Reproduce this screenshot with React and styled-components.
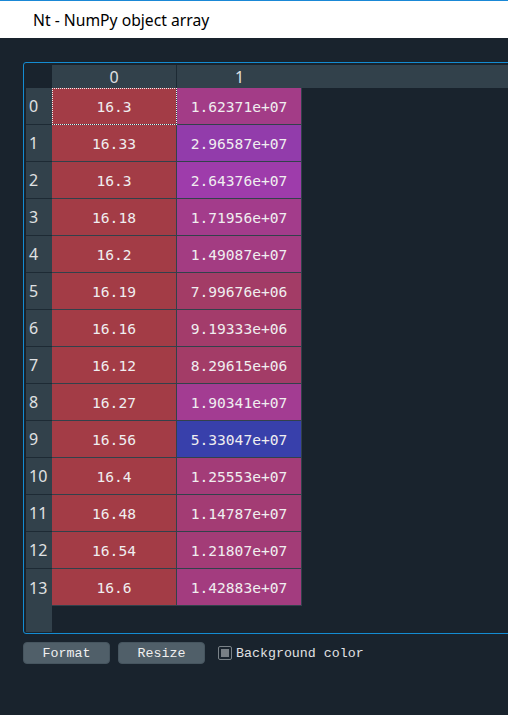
import styled, { createGlobalStyle } from "styled-components";

const GlobalStyle = createGlobalStyle`
  html, body {
    margin: 0;
    padding: 0;
    background: #19232d;
    overflow: hidden;
  }
`;

const col0 = [
  "16.3", "16.33", "16.3", "16.18", "16.2", "16.19", "16.16",
  "16.12", "16.27", "16.56", "16.4", "16.48", "16.54", "16.6",
];
const col1 = [
  "1.62371e+07", "2.96587e+07", "2.64376e+07", "1.71956e+07", "1.49087e+07",
  "7.99676e+06", "9.19333e+06", "8.29615e+06", "1.90341e+07", "5.33047e+07",
  "1.25553e+07", "1.14787e+07", "1.21807e+07", "1.42883e+07",
];

const all = [...col0, ...col1].map(Number);
const vmin = Math.min(...all);
const vmax = Math.max(...all);

// spyder-like background: hsv with alpha 0.6 over the dark page
const cellColor = (v) => {
  const h = 0.66 + (0.33 * (vmax - v)) / (vmax - vmin);
  const s = 0.7;
  const val = 1;
  const i = Math.floor(h * 6);
  const f = h * 6 - i;
  const p = val * (1 - s);
  const q = val * (1 - s * f);
  const t = val * (1 - s * (1 - f));
  const [r, g, b] = [
    [val, t, p],
    [q, val, p],
    [p, val, t],
    [p, q, val],
    [t, p, val],
    [val, p, q],
  ][i % 6];
  const mix = (c, bg) => Math.round(0.6 * c * 255 + 0.4 * bg);
  return `rgb(${mix(r, 25)}, ${mix(g, 35)}, ${mix(b, 45)})`;
};

const Window = styled.div`
  width: 508px;
  height: 715px;
  display: flex;
  flex-direction: column;
`;

const TitleBar = styled.div`
  height: 37px;
  border-top: 1px solid #1a88d6;
  background: #ffffff;
  display: flex;
  align-items: center;
  padding-left: 33px;
  font-family: "Noto Sans", sans-serif;
  font-size: 15.7px;
  color: #000000;
`;

const Content = styled.div`
  flex: 1;
  padding: 24px 0 0 23px;
  display: flex;
  flex-direction: column;
  gap: 8px;
`;

const Frame = styled.div`
  box-sizing: border-box;
  height: 572px;
  margin-right: -20px;
  border: 1px solid #148cd2;
  border-radius: 3px;
  padding: 2px 0 1px 2px;
  display: grid;
  grid-template-columns: 26px 1fr;
  grid-template-rows: 23px 1fr;
  overflow: hidden;
`;

const Corner = styled.div`
  background: #19232d;
`;

const HHeader = styled.div`
  background: #32414b;
  display: flex;
`;

const HCell = styled.div`
  width: 125px;
  box-sizing: border-box;
  border-right: 1px solid #1d2a34;
  display: flex;
  align-items: center;
  justify-content: center;
  font-family: "Noto Sans", sans-serif;
  font-size: 16px;
  color: #e0e1e3;
  &:last-child {
    border-right: none;
  }
`;

const VHeader = styled.div`
  background: #32414b;
  display: flex;
  flex-direction: column;
`;

const VCell = styled.div`
  height: 37px;
  flex-shrink: 0;
  box-sizing: border-box;
  border-bottom: 1px solid #1d2a34;
  display: flex;
  align-items: center;
  padding-left: 3px;
  font-family: "Noto Sans", sans-serif;
  font-size: 16px;
  color: #e0e1e3;
  &:nth-last-child(2) {
    border-bottom: none;
  }
`;

const VFiller = styled.div`
  flex: 1;
`;

const Body = styled.div`
  display: flex;
  flex-direction: column;
`;

const Row = styled.div`
  display: flex;
  height: 37px;
  flex-shrink: 0;
`;

const Cell = styled.div`
  width: 125px;
  box-sizing: border-box;
  border-right: 1px solid #32414b;
  border-bottom: 1px solid #32414b;
  display: flex;
  align-items: center;
  justify-content: center;
  font-family: "DejaVu Sans Mono", monospace;
  font-size: 14.6px;
  color: #f0eef0;
  background: ${(p) => p.$bg};
  outline: ${(p) => (p.$focus ? "1px dotted #f0f0f0" : "none")};
  outline-offset: -1px;
`;

const Toolbar = styled.div`
  display: flex;
  align-items: center;
  gap: 8px;
  font-family: "Liberation Mono", monospace;
  font-size: 13.3px;
  color: #e0e1e3;
`;

const Button = styled.button`
  width: 87px;
  height: 22px;
  border: 1px solid #46555f;
  border-radius: 4px;
  background: #505f69;
  color: #f0f0f0;
  font: inherit;
  padding: 0;
`;

const CheckLabel = styled.label`
  display: flex;
  align-items: center;
  gap: 4px;
  margin-left: 5px;
`;

const Box = styled.span`
  width: 14px;
  height: 14px;
  box-sizing: border-box;
  border: 1px solid #7a8288;
  border-radius: 2px;
  display: flex;
  align-items: center;
  justify-content: center;
  &::after {
    content: "";
    width: 8px;
    height: 8px;
    background: #787f85;
  }
`;

export default function App() {
  return (
    <Window>
      <GlobalStyle />
      <TitleBar>Nt - NumPy object array</TitleBar>
      <Content>
        <Frame>
          <Corner />
          <HHeader>
            <HCell>0</HCell>
            <HCell>1</HCell>
          </HHeader>
          <VHeader>
            {col0.map((_, i) => (
              <VCell key={i}>{i}</VCell>
            ))}
            <VFiller />
          </VHeader>
          <Body>
            {col0.map((a, i) => (
              <Row key={i}>
                <Cell $bg={cellColor(Number(a))} $focus={i === 0}>
                  {a}
                </Cell>
                <Cell $bg={cellColor(Number(col1[i]))}>{col1[i]}</Cell>
              </Row>
            ))}
          </Body>
        </Frame>
        <Toolbar>
          <Button>Format</Button>
          <Button>Resize</Button>
          <CheckLabel>
            <Box />
            Background color
          </CheckLabel>
        </Toolbar>
      </Content>
    </Window>
  );
}
